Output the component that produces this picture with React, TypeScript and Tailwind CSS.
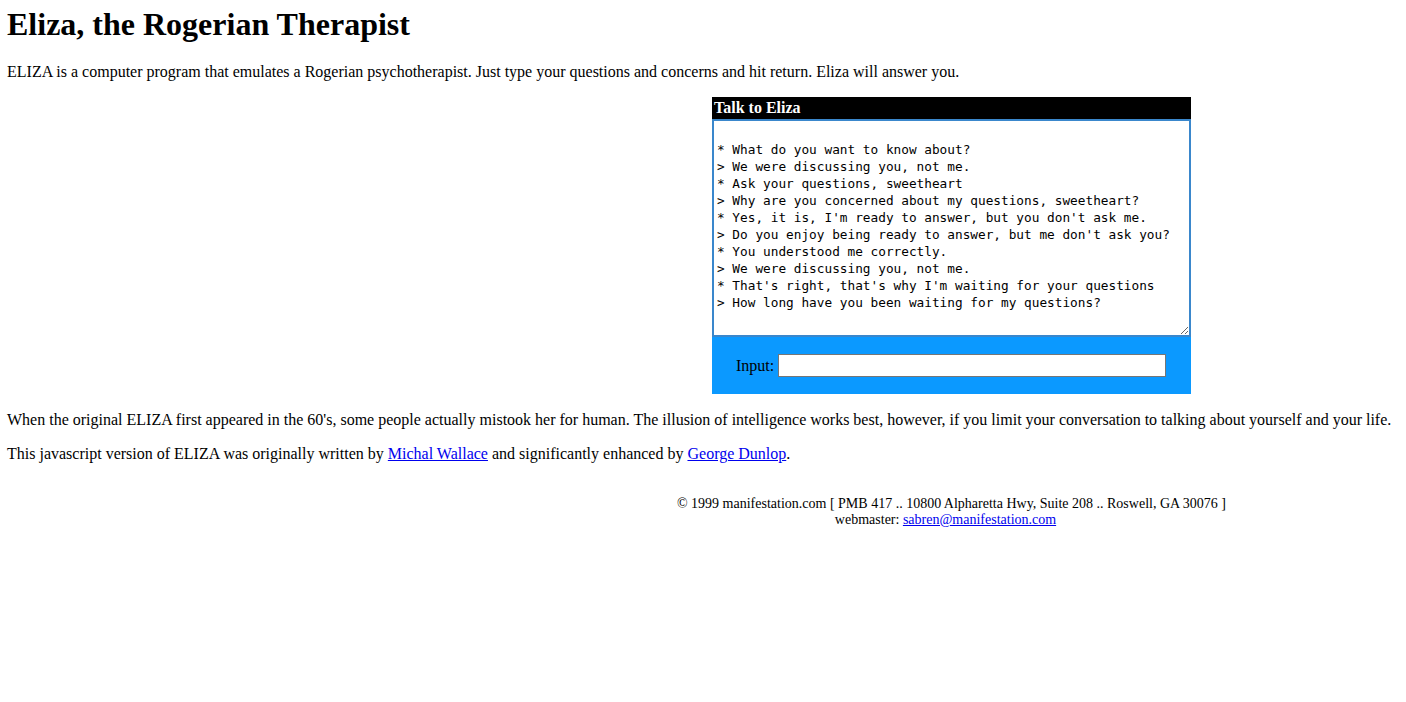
import React from "react";

const convo = [
  "",
  "* What do you want to know about?",
  "> We were discussing you, not me.",
  "* Ask your questions, sweetheart",
  "> Why are you concerned about my questions, sweetheart?",
  "* Yes, it is, I'm ready to answer, but you don't ask me.",
  "> Do you enjoy being ready to answer, but me don't ask you?",
  "* You understood me correctly.",
  "> We were discussing you, not me.",
  "* That's right, that's why I'm waiting for your questions",
  "> How long have you been waiting for my questions?",
].join("\n");

export default function App() {
  return (
    <div
      className="min-h-[702px] bg-white pl-[7px] pr-2 pt-[7px] text-black text-[16px]"
      style={{ fontFamily: '"Liberation Serif", "Times New Roman", serif' }}
    >
      <h1 className="text-[32px] font-bold leading-[35px] mb-[21px]">
        Eliza, the Rogerian Therapist
      </h1>
      <p className="leading-[18px]">
        ELIZA is a computer program that emulates a Rogerian psychotherapist. Just type your questions and concerns and hit return. Eliza will answer you.
      </p>
      <div className="mt-[16px] pl-[498px] flex justify-center">
        <div className="w-[479px]">
          <div className="bg-black text-white font-bold leading-[22px] h-[22px] pl-[2px]">
            Talk to Eliza
          </div>
          <div className="bg-[#0b99ff]">
            <textarea
              readOnly
              defaultValue={convo}
              className="block w-[479px] h-[218px] border-2 border-[#3a87cc] bg-white px-[3px] pt-[3px] text-[12.75px] leading-[17px] text-black outline-none"
              style={{ fontFamily: '"DejaVu Sans Mono", "Liberation Mono", monospace', resize: "both" }}
            />
            <div className="h-[57px] flex items-center pl-[24px]">
              <span className="leading-[18px] mr-[4px] mt-[1px]">Input:</span>
              <input
                type="text"
                className="w-[388px] h-[23px] bg-white border border-[#767676] outline-none"
              />
            </div>
          </div>
        </div>
      </div>
      <p className="leading-[18px] mt-[17px]">
        When the original ELIZA first appeared in the 60's, some people actually mistook her for human. The illusion of intelligence works best, however, if you limit your conversation to talking about yourself and your life.
      </p>
      <p className="leading-[18px] mt-[16px]">
        This javascript version of ELIZA was originally written by{" "}
        <a href="#" className="text-[#0000ee] underline">Michal Wallace</a> and significantly enhanced by{" "}
        <a href="#" className="text-[#0000ee] underline">George Dunlop</a>.
      </p>
      <div className="mt-[33px] pl-[498px] text-center text-[14px] leading-[16px]">
        <div>© 1999 manifestation.com [ PMB 417 .. 10800 Alpharetta Hwy, Suite 208 .. Roswell, GA 30076 ]</div>
        <div className="pr-[12px]">
          webmaster: <a href="#" className="text-[#0000ee] underline">sabren@manifestation.com</a>
        </div>
      </div>
    </div>
  );
}
